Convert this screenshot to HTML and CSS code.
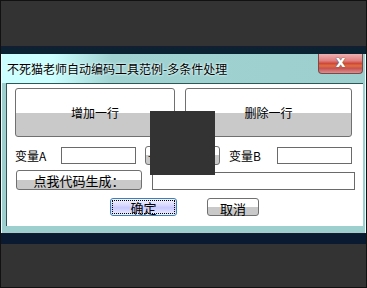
FILE: index.html
```html
<!DOCTYPE html>
<html lang="zh">
<head>
    <meta charset="UTF-8">
    <title>不死猫老师自动编码工具范例-多条件处理</title>
    <link rel="stylesheet" href="styles.css">
</head>
<body>
    <div class="desktop">
        <div class="band band-top"></div>
        <div class="window">
            <div class="titlebar">
                <span class="title">不死猫老师自动编码工具范例-多条件处理</span>
                <div class="close-btn">x</div>
            </div>
            <div class="client">
                <div class="row row-big">
                    <button class="btn big">增加一行</button>
                    <button class="btn big big-right">删除一行</button>
                </div>
                <div class="row row-vars">
                    <label class="lbl lbl-a">变量A</label>
                    <input class="field field-a" type="text">
                    <button class="btn swap">+</button>
                    <label class="lbl lbl-b">变量B</label>
                    <input class="field field-b" type="text">
                </div>
                <div class="row row-gen">
                    <button class="btn gen">点我代码生成：</button>
                    <input class="field output" type="text">
                </div>
                <div class="row row-ok">
                    <button class="btn ok"><span class="focus">确定</span></button>
                    <button class="btn cancel">取消</button>
                </div>
            </div>
        </div>
        <div class="band band-bottom"></div>
        <div class="cover"></div>
    </div>
</body>
</html>
```
FILE: styles.css
```css
body {
    margin: 0;
    padding: 0;
    background: #333333;
    font-family: "Noto Sans CJK SC", "Liberation Sans", sans-serif;
    font-size: 12px;
}

.desktop {
    position: relative;
    width: 367px;
    height: 288px;
    box-sizing: border-box;
    border: 1px solid #111111;
    padding-top: 45px;
    background: #333333;
}

.band {
    background: #0b2232;
    border-top: 1px solid #1a1a30;
}

.band-top {
    height: 7px;
}

.band-bottom {
    height: 10px;
    background: #0a1a30;
}

.window {
    margin: 0 0 0 0;
    width: 365px;
    height: 179px;
    box-sizing: border-box;
    background: #9dcfcf;
    border-left: 1px solid #e8ffff;
    border-right: 1px solid #e8ffff;
    display: flex;
    flex-direction: column;
}

.titlebar {
    height: 29px;
    display: flex;
    align-items: center;
    justify-content: space-between;
    background: linear-gradient(to right, #ccffff 0, #ccffff 50px, #a0d2d2 110px, #9dcfcf 100%);
}

.title {
    margin-left: 5px;
    color: #000;
    line-height: 14px;
    text-shadow: 0 0 2px #eaffff, 0 0 3px #eaffff;
}

.close-btn {
    align-self: flex-start;
    width: 45px;
    height: 20px;
    margin-right: 2px;
    box-sizing: border-box;
    border: 1px solid #7a4a4a;
    border-top: none;
    border-radius: 0 0 4px 4px;
    background: linear-gradient(#f0b0b0 0, #e08080 35%, #d04838 50%, #e07040 62%, #c85050 75%, #d89090 100%);
    color: #fff;
    font-family: "DejaVu Sans", sans-serif;
    font-weight: bold;
    font-size: 15px;
    line-height: 17px;
    text-align: center;
    text-shadow: 0 0 1px #555, 0 0 1px #555;
}

.client {
    height: 143px;
    margin: 0 2px 0 4px;
    background: #fff;
    border-top: 1px solid #2c5858;
    border-left: 1px solid #2c5858;
    box-sizing: border-box;
    padding: 4px 0 0 8px;
}

.row {
    display: flex;
    align-items: center;
}

.btn {
    font-family: inherit;
    font-size: 12px;
    color: #000;
    padding: 0;
    box-sizing: border-box;
    border: 1px solid #707070;
    border-radius: 3px;
    background: linear-gradient(#ffffff 0, #ffffff 50%, #c9c9c9 50%, #c9c9c9 100%);
}

.row-big {
    height: 49px;
}

.big {
    width: 160px;
    height: 49px;
}

.big-right {
    width: 167px;
    margin-left: 10px;
}

.row-vars {
    margin-top: 10px;
    height: 17px;
}

.lbl {
    width: 46px;
}

.field {
    box-sizing: border-box;
    height: 17px;
    border: 1px solid #6a6a6a;
    padding: 0;
    background: #fff;
}

.field-a, .field-b {
    width: 75px;
}

.swap {
    width: 75px;
    height: 19px;
    margin: 0 9px 0 9px;
    text-align: left;
    padding-left: 2px;
}

.lbl-b {
    width: 48px;
}

.row-gen {
    margin-top: 6px;
    height: 20px;
}

.gen {
    width: 126px;
    height: 20px;
    margin-left: 1px;
    font-size: 13px;
}

.output {
    width: 203px;
    height: 18px;
    margin-left: 10px;
    margin-top: 2px;
}

.row-ok {
    margin-top: 8px;
    padding-left: 95px;
}

.ok {
    width: 67px;
    height: 18px;
    border: 1px solid #3c80b8;
    background: linear-gradient(#f4f4ff 0, #d8d8ff 40%, #c8c8ff 55%, #f0f0ff 100%);
    padding: 1px;
}

.focus {
    display: block;
    height: 100%;
    box-sizing: border-box;
    border: 1px dotted #000;
    line-height: 13px;
    font-size: 13px;
}

.cancel {
    width: 52px;
    height: 18px;
    margin-left: 30px;
    font-size: 13px;
}

.cover {
    position: absolute;
    left: 149px;
    top: 110px;
    width: 65px;
    height: 64px;
    background: #333333;
}
```
